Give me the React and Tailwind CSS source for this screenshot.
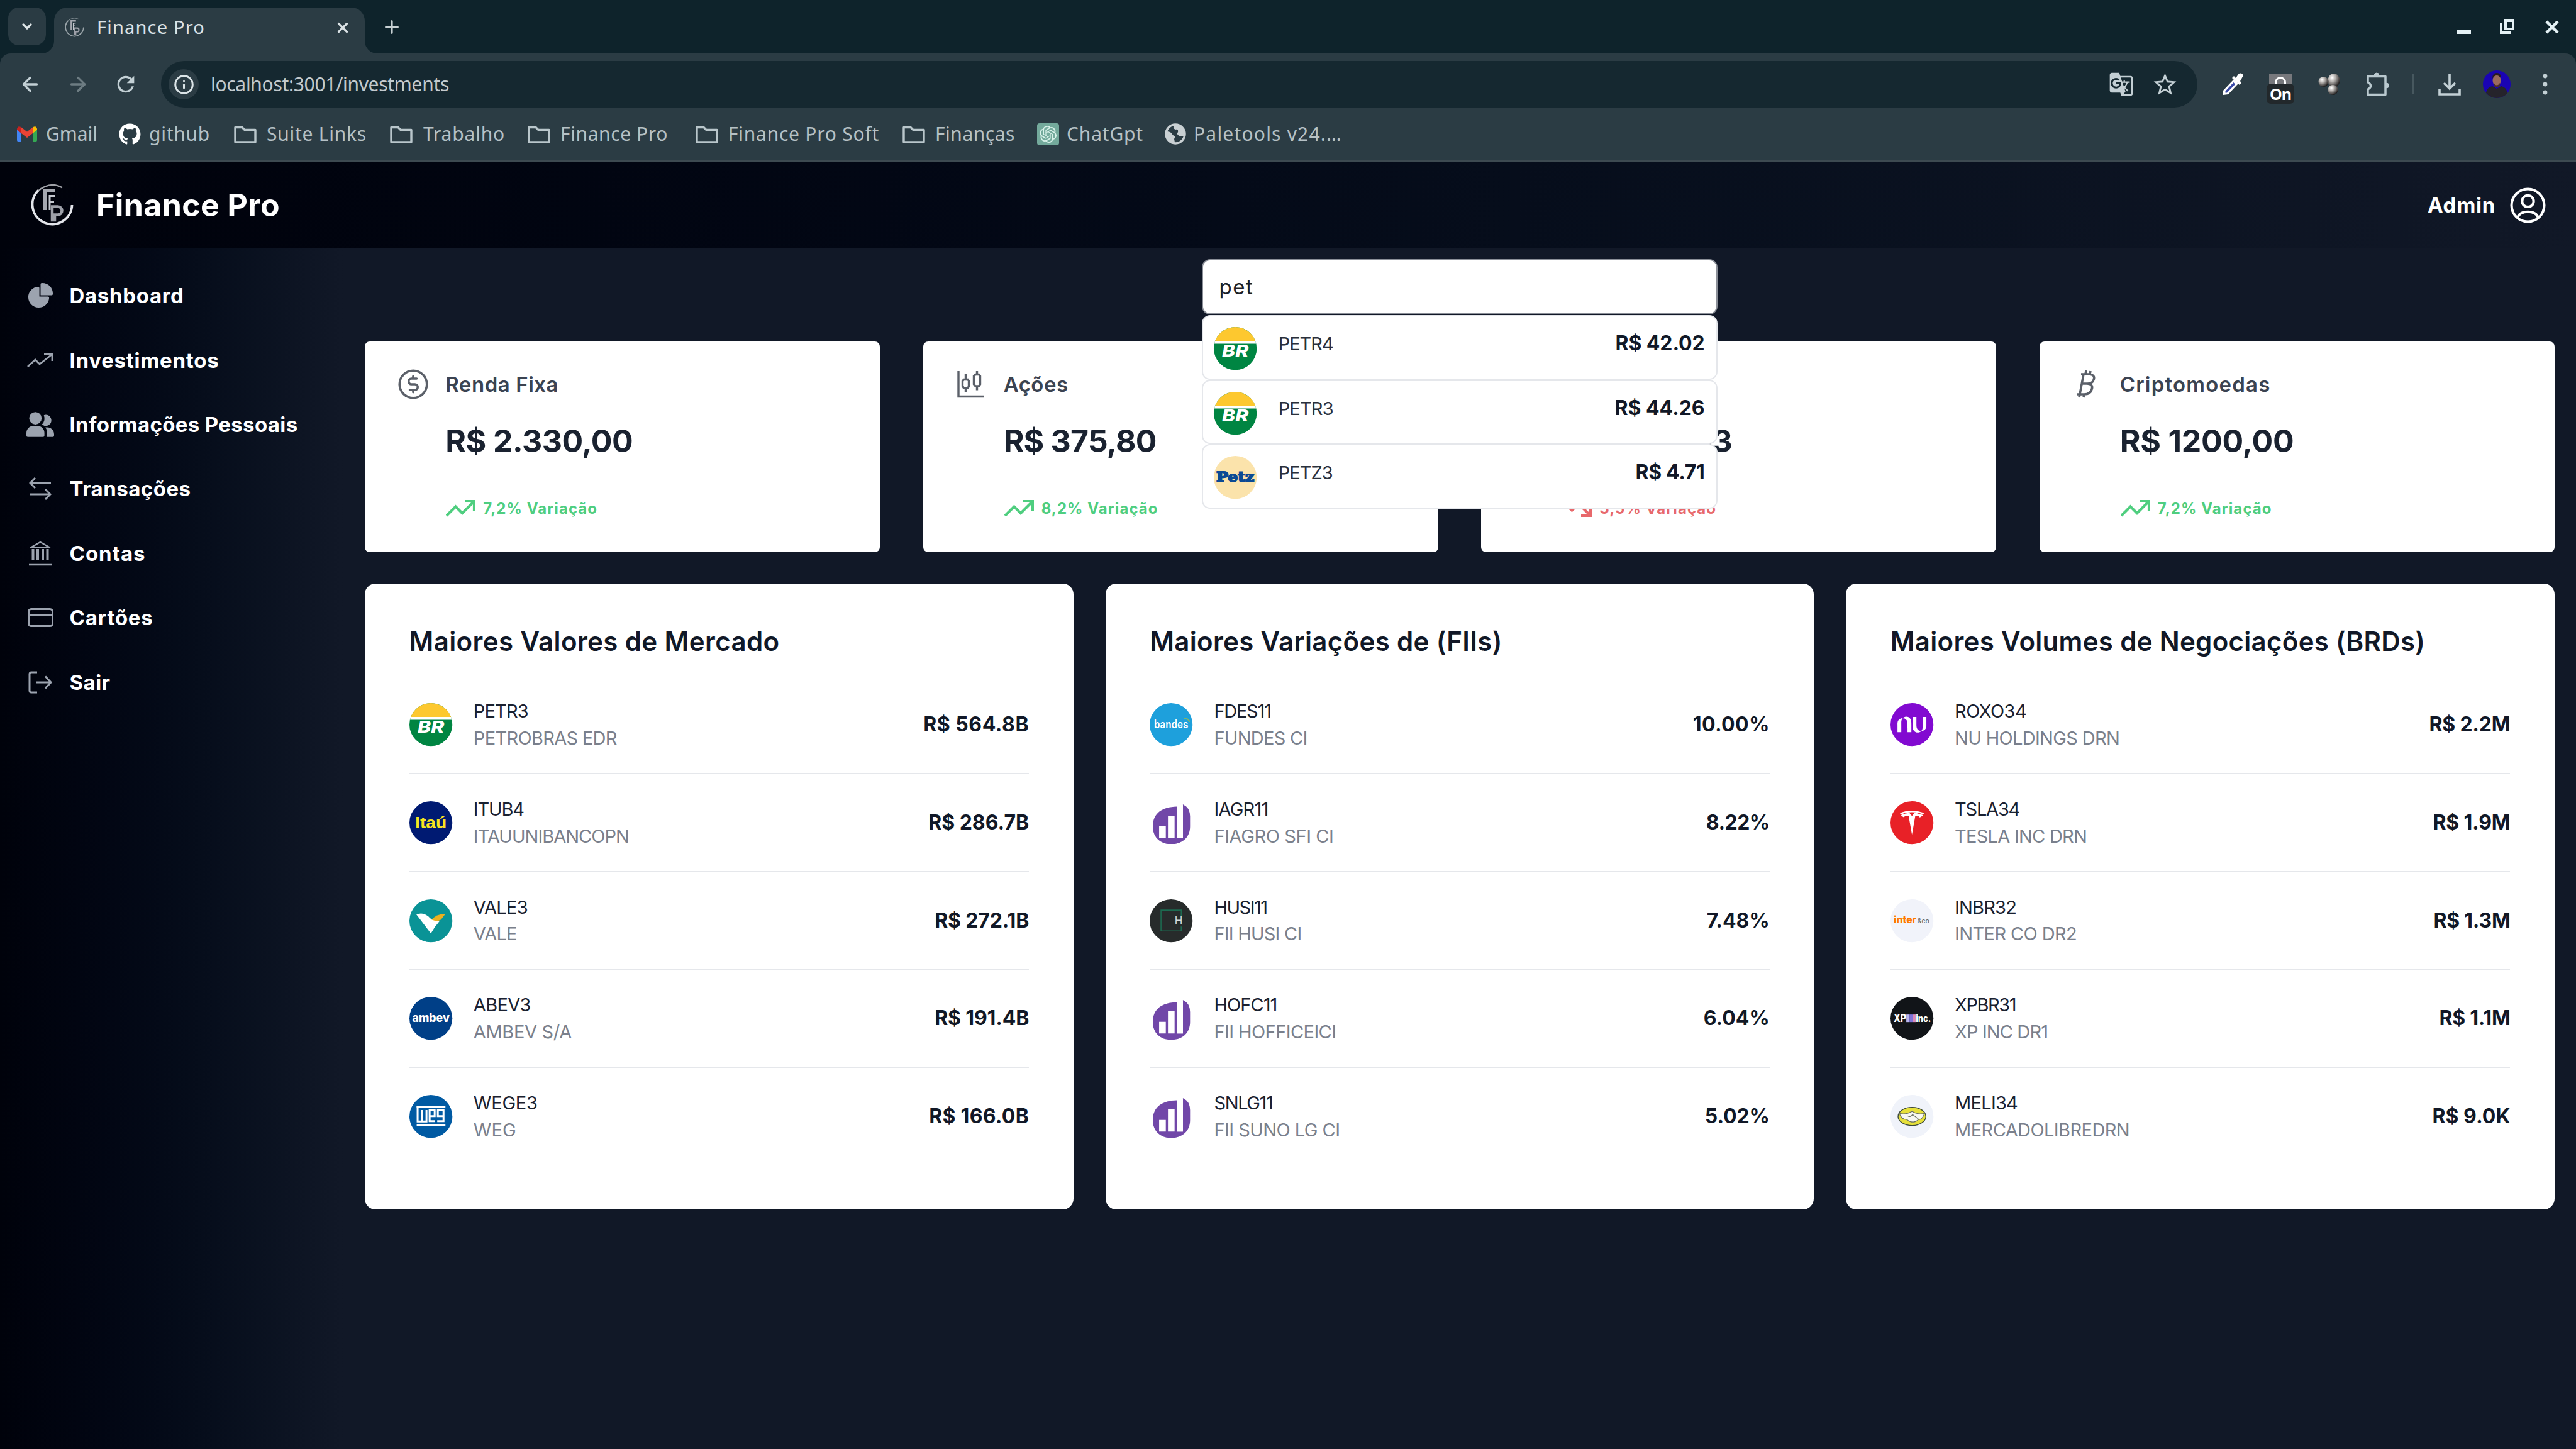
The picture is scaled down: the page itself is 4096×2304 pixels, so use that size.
import { useLayoutEffect, useRef } from 'react';
import { ChevronDown, X, Plus, ArrowLeft, ArrowRight, Info } from 'lucide-react';
import { FaGithub } from 'react-icons/fa';
import { MdGTranslate, MdRefresh, MdStarBorder } from 'react-icons/md';
import { SiOpenai, SiTesla, SiNubank } from 'react-icons/si';
import { PiCurrencyCircleDollar } from 'react-icons/pi';

/* Single-line label whose tracking is adjusted so that it spans `w` pixels. */
function T({ w, className = '', children }) {
  const ref = useRef(null);
  useLayoutEffect(() => {
    const el = ref.current;
    el.style.letterSpacing = '0px';
    const natural = el.getBoundingClientRect().width;
    el.style.letterSpacing = `${(w - natural) / el.textContent.length}px`;
  }, [w, children]);
  return (
    <span ref={ref} className={`inline-block whitespace-pre ${className}`}>
      {children}
    </span>
  );
}

/* ---------- browser chrome ---------- */

function BrandMark({ className }) {
  return (
    <svg viewBox="0 0 68 68" className={className} fill="none">
      <path d="M50 6.500A31.500 31.500 0 0 0 4 25" stroke="currentColor" strokeWidth="2.500" opacity="0.700" />
      <path d="M12 10.500A31.500 31.500 0 1 0 65.500 34" stroke="currentColor" strokeWidth="3.800" />
      <path d="M22.500 42V11.500H39" stroke="#a5a8b0" strokeWidth="5" />
      <path d="M30 42V19.500H38M30 29H37" stroke="#c4c7ce" strokeWidth="3" />
      <path d="M34 58V36.500H43a6.500 6.500 0 0 1 0 13H38V58Z" stroke="#9da0a8" strokeWidth="4.500" />
    </svg>
  );
}

function TabStrip() {
  return (
    <div className="flex h-[85px] items-end bg-[#0e232b] pl-[13px]">
      <div className="mb-[13px] flex size-[60px] items-center justify-center rounded-[17px] bg-[#2a3b43]">
        <ChevronDown className="size-[24px] text-[#dfe6e8]" strokeWidth={3.400} />
      </div>
      <div className="relative ml-[13px] flex h-[73px] w-[494px] items-center rounded-t-[21px] bg-[#2b3c44] pb-[10px] pl-[17px] pr-[22px]">
        <svg viewBox="0 0 20 20" className="absolute bottom-0 -left-[20px] size-[20px]"><path d="M20 0V20H0A20 20 0 0 0 20 0Z" fill="#2b3c44" /></svg>
        <svg viewBox="0 0 20 20" className="absolute bottom-0 -right-[20px] size-[20px]"><path d="M0 0V20H20A20 20 0 0 1 0 0Z" fill="#2b3c44" /></svg>
        <BrandMark className="size-[31px] text-[#9aa4a9]" />
        <T w={172} className="-mt-[2px] ml-[20px] text-[29px] leading-[40px] text-[#dbe2e5]">Finance Pro</T>
        <X className="ml-auto size-[26px] text-[#dbe2e5]" strokeWidth={3} />
      </div>
      <Plus className="mb-[26px] ml-[27px] size-[32px] text-[#c7d0d3]" strokeWidth={2.400} />
      <div className="mb-[31px] ml-auto mr-[27px] flex h-[23px] items-end">
        <div className="h-[6px] w-[22px] bg-[#e4f1f5]" />
        <svg viewBox="0 0 23 23" className="ml-[46px] size-[23px]" fill="none" stroke="#e4f1f5">
          <path d="M9 2H21V15H9Z" strokeWidth="4" />
          <path d="M2 6V21H17" strokeWidth="4" />
        </svg>
        <svg viewBox="0 0 22 22" className="ml-[49px] size-[22px]" stroke="#e4f1f5" strokeWidth="4.500">
          <path d="M2 2L20 20M20 2L2 20" />
        </svg>
      </div>
    </div>
  );
}

function AddressRow() {
  return (
    <div className="flex h-[74px] items-center pl-[30px]">
      <ArrowLeft className="size-[36px] text-[#c3d0d5]" strokeWidth={2.200} />
      <ArrowRight className="ml-[40px] size-[36px] text-[#6d7c82]" strokeWidth={2.200} />
      <MdRefresh className="ml-[38px] size-[40px] text-[#c3d0d5]" />
      <div className="ml-[36px] flex h-[74px] w-[3238px] shrink-0 items-center rounded-full bg-[#152830] pl-[12px] pr-[30px]">
        <div className="flex size-[48px] items-center justify-center rounded-full bg-[#2b3c44]">
          <Info className="size-[33px] text-[#dbe4e7]" strokeWidth={2.200} />
        </div>
        <T w={379} className="ml-[19px] text-[30px] leading-[44px] text-[#c3cacd]">localhost:3001/investments</T>
        <MdGTranslate className="ml-auto size-[40px] text-[#c3cfd4]" />
        <MdStarBorder className="ml-[28px] size-[43px] text-[#c3cfd4]" />
      </div>
      <svg viewBox="0 0 36 38" className="ml-[38px] h-[38px] w-[36px]">
        <path d="M3 36V29L20 11L27 18L11 35Z" fill="#fff" />
        <path d="M6.500 32.500V30L19.500 16L22 19L9 32.500Z" fill="#3a4aa8" />
        <path d="M17 9L20 6L23 9L28 2Q33 0 35 5L30 14L32 17L29 20Z" fill="#fff" />
      </svg>
      <div className="ml-[36px] flex w-[44px] flex-col items-center pt-[14px]">
        <div className="h-[15px] w-[36px] overflow-hidden bg-[#77787c]">
          <div className="mx-auto mt-[4px] h-[24px] w-[18px] rounded-t-full border-[3px] border-white" />
        </div>
        <div className="flex h-[32px] w-[44px] items-center justify-center rounded-[7px] bg-[#22282b]">
          <T w={34} className="text-[25px] font-bold leading-[30px] text-white">On</T>
        </div>
      </div>
      <svg viewBox="0 0 38 38" className="ml-[37px] size-[38px]">
        <defs>
          <radialGradient id="ball" cx="0.350" cy="0.300" r="0.800">
            <stop offset="0" stopColor="#ffffff" />
            <stop offset="0.350" stopColor="#b9b5b2" />
            <stop offset="0.900" stopColor="#1d1a1a" />
          </radialGradient>
        </defs>
        <ellipse cx="26" cy="13" rx="9.500" ry="11" fill="url(#ball)" />
        <circle cx="9.500" cy="15" r="8" fill="url(#ball)" />
        <circle cx="24.500" cy="28" r="8" fill="url(#ball)" />
      </svg>
      <svg viewBox="0 0 38 38" className="ml-[39px] size-[38px]" fill="none" stroke="#b9c8ce" strokeWidth="3.500" strokeLinejoin="round">
        <path d="M3 6.500H31V35.500H3V27Q7.500 25 7.500 21.500Q7.500 18 3 16Z" />
        <path d="M13 5a4 4 0 0 1 8 0ZM32.500 17a4 4 0 0 1 0 8Z" fill="#b9c8ce" strokeWidth="1" />
      </svg>
      <div className="ml-[36px] h-[32px] w-[3px] bg-[#47585f]" />
      <svg viewBox="0 0 36 36" className="ml-[38px] size-[36px]" fill="none" stroke="#c3d0d5" strokeWidth="3.600">
        <path d="M18 1V24M9 16L18 25L27 16M2 26V34H34V26" />
      </svg>
      <svg viewBox="0 0 44 44" className="ml-[35px] size-[44px]">
        <defs><clipPath id="avatar"><circle cx="22" cy="22" r="22" /></clipPath></defs>
        <g clipPath="url(#avatar)">
          <rect width="44" height="44" fill="#1a04b4" />
          <path d="M4 44Q4 27 15 25L22 29L29 25Q40 27 40 44Z" fill="#25232b" />
          <ellipse cx="22" cy="16" rx="6.500" ry="9" fill="#9a6a5c" />
          <path d="M15 13Q15 4 22 4Q29 4 29 13Q26 8 22 8Q18 8 15 13Z" fill="#2a1c20" />
          <path d="M17 20Q22 27 27 20V24Q22 30 17 24Z" fill="#4b2e2c" />
        </g>
      </svg>
      <svg viewBox="0 0 8 34" className="ml-[51px] h-[34px] w-[8px] shrink-0" fill="#c3d0d5">
        <circle cx="4" cy="4" r="3.400" /><circle cx="4" cy="17" r="3.400" /><circle cx="4" cy="30" r="3.400" />
      </svg>
    </div>
  );
}

function Folder() {
  return (
    <svg viewBox="0 0 36 29" className="h-[29px] w-[36px]" fill="none" stroke="#b9c6cb" strokeWidth="3.400" strokeLinejoin="round">
      <path d="M2 3.500H13L17 7.500H34V27H2Z" />
    </svg>
  );
}

function GmailIcon() {
  return (
    <svg viewBox="0 0 32 24" className="h-[24px] w-[32px]">
      <path d="M0 4V22Q0 24 2 24H7V9Z" fill="#4285f4" />
      <path d="M32 4V22Q32 24 30 24H25V9Z" fill="#34a853" />
      <path d="M25 1.500V11L32 5.500V4Q31 -1 27 0.500Z" fill="#fbbc04" />
      <path d="M7 1.500V11L0 5.500V4Q1 -1 5 0.500Z" fill="#c5221f" />
      <path d="M7 1.500L16 8.500L25 1.500V11L16 18L7 11Z" fill="#ea4335" />
    </svg>
  );
}

function GlobeIcon() {
  return (
    <svg viewBox="0 0 34 34" className="size-[34px]">
      <circle cx="17" cy="17" r="15" fill="none" stroke="#c9d0d3" strokeWidth="3.500" />
      <path d="M4 13Q10 13 13 19Q18 20 15 25Q15 29 18 32Q4 32 2 18Z" fill="#c9d0d3" />
      <path d="M15 2Q12 8 17 10Q22 9 21 14Q18 18 23 20Q29 20 31 22Q35 8 24 3Z" fill="#c9d0d3" />
    </svg>
  );
}

const bookmarks = [
  { icon: <GmailIcon />, label: 'Gmail', w: 82, ml: 'ml-[27px]', gap: 'gap-[14px]' },
  { icon: <FaGithub className="size-[35px] text-white" />, label: 'github', w: 97, ml: 'ml-[34px]', gap: 'gap-[13px]' },
  { icon: <Folder />, label: 'Suite Links', w: 159, ml: 'ml-[38px]', gap: 'gap-[16px]' },
  { icon: <Folder />, label: 'Trabalho', w: 130, ml: 'ml-[37px]', gap: 'gap-[17px]' },
  { icon: <Folder />, label: 'Finance Pro', w: 171, ml: 'ml-[36px]', gap: 'gap-[16px]' },
  { icon: <Folder />, label: 'Finance Pro Soft', w: 240, ml: 'ml-[44px]', gap: 'gap-[16px]' },
  { icon: <Folder />, label: 'Finanças', w: 127, ml: 'ml-[37px]', gap: 'gap-[16px]' },
  {
    icon: (
      <div className="flex size-[35px] items-center justify-center rounded-[4px] bg-[#74aa9c]">
        <SiOpenai className="size-[27px] text-[#d9f2ea]" />
      </div>
    ),
    label: 'ChatGpt', w: 122, ml: 'ml-[35px]', gap: 'gap-[12px]',
  },
  { icon: <GlobeIcon />, label: 'Paletools v24.…', w: 236, ml: 'ml-[34px]', gap: 'gap-[12px]' },
];

function Browser() {
  return (
    <div className="h-[258px] bg-[#0e232b] font-['Noto_Sans',sans-serif]">
      <TabStrip />
      <div className="h-[173px] rounded-t-[17px] border-b-[3px] border-[#3d4a51] bg-[#2b3c44] pt-[12px]">
        <AddressRow />
        <div className="flex h-[84px] items-center">
          {bookmarks.map((b) => (
            <div key={b.label} className={`flex items-center ${b.ml} ${b.gap}`}>
              {b.icon}
              <T w={b.w} className="text-[30px] leading-[44px] text-[#b6c1c5]">{b.label}</T>
            </div>
          ))}
        </div>
      </div>
    </div>
  );
}

/* ---------- application header and sidebar ---------- */

function Header() {
  return (
    <header className="flex h-[136px] items-center bg-linear-to-r from-[#00020b] to-[#111827] pl-[49px] pr-[48px] font-bold text-white">
      <BrandMark className="size-[68px] text-[#e3e5ea]" />
      <T w={292} className="ml-[36px] text-[50px] leading-[68px]">Finance Pro</T>
      <T w={108} className="ml-auto text-[33px] leading-[48px]">Admin</T>
      <svg viewBox="0 0 56 56" className="ml-[23px] size-[57px]" fill="none" stroke="#fff" strokeWidth="4">
        <circle cx="28" cy="28" r="25.500" />
        <circle cx="28" cy="21.500" r="9" />
        <path d="M12 47Q15 38 28 38Q41 38 44 47" />
      </svg>
    </header>
  );
}

const navItems = [
  {
    label: 'Dashboard', w: 182,
    icon: (
      <svg viewBox="0 0 22 21" className="h-[41px] w-[43px]" fill="currentColor">
        <path d="M16.975 11H10V4.025a1 1 0 0 0-1.066-.998 8.500 8.500 0 1 0 9.039 9.039.999.999 0 0 0-1-1.066h.002Z" />
        <path d="M12.500 0c-.157 0-.311.010-.565.027A1 1 0 0 0 11 1.020V10h8.975a1 1 0 0 0 1-.935c.013-.188.028-.374.028-.565A8.510 8.510 0 0 0 12.500 0Z" />
      </svg>
    ),
  },
  {
    label: 'Investimentos', w: 238,
    icon: (
      <svg viewBox="0 0 42 24" className="h-[24px] w-[42px]" fill="none" stroke="currentColor" strokeWidth="2.800">
        <path d="M1 22L13 11L20 18L39 3M27 2H40V13" />
      </svg>
    ),
  },
  {
    label: 'Informações Pessoais', w: 363,
    icon: (
      <svg viewBox="0 0 20 18" className="h-[40px] w-[44px]" fill="currentColor">
        <path d="M14 2a3.963 3.963 0 0 0-1.400.267 6.439 6.439 0 0 1-1.331 6.638A4 4 0 1 0 14 2Zm1 9h-1.264A6.957 6.957 0 0 1 15 15v2a2.970 2.970 0 0 1-.184 1H19a1 1 0 0 0 1-1v-1a5.006 5.006 0 0 0-5-5ZM6.500 9a4.500 4.500 0 1 0 0-9 4.500 4.500 0 0 0 0 9ZM8 10H5a5.006 5.006 0 0 0-5 5v2a1 1 0 0 0 1 1h11a1 1 0 0 0 1-1v-2a5.006 5.006 0 0 0-5-5Z" />
      </svg>
    ),
  },
  {
    label: 'Transações', w: 193,
    icon: (
      <svg viewBox="0 0 36 36" className="size-[36px]" fill="none" stroke="currentColor" strokeWidth="3">
        <path d="M35 9H2M10 1L2 9L10 17M1 27H34M26 19L34 27L26 35" />
      </svg>
    ),
  },
  {
    label: 'Contas', w: 121,
    icon: (
      <svg viewBox="0 0 38 40" className="h-[40px] w-[38px]" fill="none" stroke="currentColor">
        <path d="M4 10.500L19 2L34 10.500Z" strokeWidth="2.400" strokeLinejoin="round" />
        <path d="M7.500 13V31M15 13V31M23 13V31M30.500 13V31" strokeWidth="4" />
        <path d="M1 37.500H37" strokeWidth="3.400" />
      </svg>
    ),
  },
  {
    label: 'Cartões', w: 133,
    icon: (
      <svg viewBox="0 0 41 30" className="h-[30px] w-[41px]" fill="none" stroke="currentColor" strokeWidth="3">
        <rect x="1.500" y="1.500" width="38" height="27" rx="4" />
        <path d="M2 10.500H39" />
      </svg>
    ),
  },
  {
    label: 'Sair', w: 65,
    icon: (
      <svg viewBox="0 0 38 36" className="h-[36px] w-[38px]" fill="none" stroke="currentColor" strokeWidth="3">
        <path d="M14 2H5Q2 2 2 5V31Q2 34 5 34H14M12 18H36M27 8.500L36 18L27 27.500" />
      </svg>
    ),
  },
];

function Sidebar() {
  return (
    <aside className="w-[546px] shrink-0 bg-linear-to-r from-[#00020b] to-[#111827] pt-[25px]">
      {navItems.map((n) => (
        <div key={n.label} className="flex h-[102.400px] items-center pl-[36px]">
          <div className="flex w-[56px] justify-center text-[#9ca3af]">{n.icon}</div>
          <T w={n.w} className="ml-[18.500px] text-[33px] font-bold leading-[48px] text-white">{n.label}</T>
        </div>
      ))}
    </aside>
  );
}

/* ---------- company logos (68 x 68 grid) ---------- */

function Disc({ fill, children }) {
  return (
    <svg viewBox="0 0 68 68" className="size-[68.300px] shrink-0 overflow-visible">
      <circle cx="34" cy="34" r="34" fill={fill} />
      {children}
    </svg>
  );
}

function Word({ x = 34, y = 41, size = 22, fill = '#fff', len, family = 'Inter', weight = 800, italic, children }) {
  return (
    <text x={x} y={y} fontSize={size} fill={fill} textAnchor="middle" textLength={len} lengthAdjust="spacingAndGlyphs" fontFamily={family} fontWeight={weight} fontStyle={italic ? 'italic' : 'normal'}>
      {children}
    </text>
  );
}

const Petrobras = () => (
  <Disc fill="#008542">
    <path d="M2.200 22A34 34 0 0 1 65.800 22Z" fill="#fdc82f" />
    <path d="M2.200 22H65.800L67 26.500H1Z" fill="#fff" />
    <Word y={47} size={25} len={42} weight={800} italic>BR</Word>
  </Disc>
);

const Itau = () => (
  <Disc fill="#001a72"><Word y={43} size={26} len={50} fill="#f7e51e" weight={700} family="Liberation Sans">Itaú</Word></Disc>
);

const Vale = () => (
  <Disc fill="#0a9396">
    <path d="M11 24Q23 19 33 30L45 36L34 54Z" fill="#fff" />
    <path d="M36 32L48 34L41 43Z" fill="#fff" />
    <path d="M35 32Q44 23 57 23L50 32Q44 36 35 32Z" fill="#ecb11f" />
  </Disc>
);

const Ambev = () => (
  <Disc fill="#003f87"><Word y={40} size={19} len={59} weight={800}>ambev</Word></Disc>
);

const Weg = () => (
  <Disc fill="#005aa3">
    <g fill="none" stroke="#fff" strokeWidth="3">
      <path d="M11.500 19H57M11.500 48H57" />
      <path d="M13 18V42H27V24M20 24V42M40 41.500H32V24.500H40V33.500H32" />
      <path d="M54 33.500H45V24.500H54V41.500H44" />
    </g>
  </Disc>
);

const Bandes = () => (
  <Disc fill="#1ea0dc">
    <Word y={40} size={18} len={54} weight={600}>bandes</Word>
    <path d="M54 25Q61 23 63 30" stroke="#7fb56a" strokeWidth="2" fill="none" />
  </Disc>
);

const PurpleBars = () => (
  <svg viewBox="0 0 68 68" className="size-[68.300px] shrink-0">
    <path d="M5 40C5 19 20 9 43 8.500V58H52.700V5L58 8.500Q64 14 64 24V40C64 57 52 68 34 68C17 68 5 57 5 40Z" fill="#7147a8" />
    <path d="M15 39.500H25.600V58H15ZM29 23H39.500V58H29ZM43 6H52.700V58H43Z" fill="#fff" />
  </svg>
);

const Husi = () => (
  <Disc fill="#272b2b">
    <path d="M50 26V17H18V50H50V43" stroke="#1d6a50" strokeWidth="1.600" fill="none" />
    <Word x={46} y={40} size={17} weight={400} fill="#d5dada">H</Word>
  </Disc>
);

const Nu = () => (
  <Disc fill="#820ad1"><g transform="translate(11 11)"><SiNubank size={46} color="#fff" /></g></Disc>
);

const Tesla = () => (
  <Disc fill="#e82127"><g transform="translate(15 15)"><SiTesla size={38} color="#fff" /></g></Disc>
);

const Inter = () => (
  <Disc fill="#f1f3fa">
    <Word x={23} y={38} size={15} len={36} fill="#ff7a00">inter</Word>
    <Word x={52} y={38} size={10} len={19} weight={500} fill="#6b6b6b">&amp;co</Word>
  </Disc>
);

const Xp = () => (
  <Disc fill="#111418">
    <Word x={15} y={40} size={17} len={20}>XP</Word>
    <path d="M25 28H30V40H25Z" fill="#b9b4ee" /><path d="M30 28H35V40H30Z" fill="#7f74d8" /><path d="M35 28H40V40H35Z" fill="#d98ab8" />
    <Word x={52} y={40} size={15} len={24}>inc.</Word>
  </Disc>
);

const Meli = () => (
  <Disc fill="#f0f3fa">
    <ellipse cx="34" cy="34" rx="22" ry="14.500" fill="#e6e03a" stroke="#3d4a3a" strokeWidth="1.400" />
    <path d="M14 29Q24 32 34 26Q44 32 54 29Q50 40 44 39Q36 47 26 39Q17 39 14 29Z" fill="#f7f8f2" stroke="#6d7266" strokeWidth="1.200" />
    <path d="M27 33Q32 36 35 31L44 38" stroke="#6d7266" strokeWidth="1.200" fill="none" />
  </Disc>
);

const Petz = () => (
  <Disc fill="#fbe3ab">
    <text x="34" y="41" fontSize="23" fill="#0b4a94" stroke="#0b4a94" strokeWidth="1.800" textAnchor="middle" textLength="60" lengthAdjust="spacingAndGlyphs" fontFamily="DejaVu Serif" fontWeight="700">Petz</text>
  </Disc>
);

/* ---------- content ---------- */

const suggestions = [
  { Logo: Petrobras, code: 'PETR4', cw: 87, price: 'R$ 42.02', pw: 142 },
  { Logo: Petrobras, code: 'PETR3', cw: 87, price: 'R$ 44.26', pw: 143 },
  { Logo: Petz, code: 'PETZ3', cw: 86, price: 'R$ 4.71', pw: 110 },
];

function Search() {
  return (
    <div className="relative mx-auto w-[819.200px]">
      <div className="flex h-[88px] items-center rounded-[13px] border-2 border-[#8b8f98] bg-white pl-[25px]">
        <T w={55} className="text-[33px] leading-[48px] text-[#1c1f26]">pet</T>
      </div>
      <div className="absolute top-[89.400px] left-0 z-10 w-full">
        {suggestions.map(({ Logo, code, cw, price, pw }) => (
          <div key={code} className="flex h-[102.400px] justify-between rounded-[13px] border-2 border-[#e5e7eb] bg-white pt-[17px] pr-[18px] pl-[17px]">
            <div className="flex gap-[34px]">
              <Logo />
              <T w={cw} className="mt-[5px] text-[29px] leading-[43px] text-[#2a303c]">{code}</T>
            </div>
            <T w={pw} className="mt-[2px] text-[32px] font-bold leading-[48px] text-[#111827]">{price}</T>
          </div>
        ))}
      </div>
    </div>
  );
}

const CandleIcon = () => (
  <svg viewBox="0 0 44 44" className="size-[44px]" fill="none" stroke="currentColor" strokeWidth="3.400">
    <path d="M3 1V41.500H43" />
    <path d="M14.500 5V14M14.500 28V34M18 14.500L19.500 17V25L18 28H11.500L9.500 25V17L11.500 14.500ZM32.500 1V7M32.500 25V31.500M35.500 6.500L37.500 9V22L35.500 25H30L27.500 22V9L30 6.500Z" />
  </svg>
);

const BitcoinIcon = () => (
  <svg viewBox="0 0 34 44" className="ml-[4px] h-[44px] w-[34px]" fill="none" stroke="currentColor" strokeWidth="3.600" strokeLinejoin="round">
    <path d="M9 6H22Q32 7 29 15Q27 21 19 21H11M19 21Q29 22 26 30Q24 38 14 38H2M13 6L7 38M16 6L17 0M23 6L24 1M7 38L6 43M14 38L13 43" />
  </svg>
);

const TrendIcon = ({ down }) => (
  <svg viewBox="0 0 47 27" className={down ? 'h-[27px] w-[47px] -scale-y-100' : 'h-[27px] w-[47px]'} fill="none" stroke="currentColor" strokeWidth="4.200">
    <path d="M1 25L15.500 10.500L26 21L44 3M30 2H45V17" />
  </svg>
);

const summary = [
  { icon: <PiCurrencyCircleDollar className="-ml-[5px] size-[58px]" />, name: 'Renda Fixa', nw: 180, amount: 'R$ 2.330,00', aw: 298, change: '7,2% Variação', vw: 182 },
  { icon: <CandleIcon />, name: 'Ações', nw: 103, amount: 'R$ 375,80', aw: 243, change: '8,2% Variação', vw: 186 },
  { icon: <PiCurrencyCircleDollar className="-ml-[5px] size-[58px]" />, name: 'FIIs', nw: 62, amount: 'R$ 1200,33', aw: 271, change: '3,5% Variação', vw: 186, down: true },
  { icon: <BitcoinIcon />, name: 'Criptomoedas', nw: 240, amount: 'R$ 1200,00', aw: 277, change: '7,2% Variação', vw: 182 },
];

function SummaryCard({ icon, name, nw, amount, aw, change, vw, down }) {
  return (
    <div className="h-[335px] rounded-[8px] bg-white pt-[38px] pl-[53px]">
      <div className="flex h-[60px] items-center">
        <div className="flex w-[75px] items-center text-[#5b6069]">{icon}</div>
        <T w={nw} className="text-[33px] font-semibold leading-[48px] text-[#3b4351]">{name}</T>
      </div>
      <T w={aw} className="mt-[28px] ml-[75px] block w-fit text-[50px] font-bold leading-[64px] text-[#1a2230]">{amount}</T>
      <div className={`mt-[56px] ml-[76px] flex h-[40px] items-center gap-[12px] font-bold ${down ? 'text-[#e8686b]' : 'text-[#4fce7f]'}`}>
        <TrendIcon down={down} />
        <T w={vw} className="text-[24px] leading-[36px]">{change}</T>
      </div>
    </div>
  );
}

const rankings = [
  {
    title: 'Maiores Valores de Mercado', tw: 589,
    rows: [
      { Logo: Petrobras, code: 'PETR3', cw: 87, name: 'PETROBRAS EDR', nw: 228, value: 'R$ 564.8B', vw: 168 },
      { Logo: Itau, code: 'ITUB4', cw: 80, name: 'ITAUUNIBANCOPN', nw: 247, value: 'R$ 286.7B', vw: 160 },
      { Logo: Vale, code: 'VALE3', cw: 86, name: 'VALE', nw: 69, value: 'R$ 272.1B', vw: 150 },
      { Logo: Ambev, code: 'ABEV3', cw: 91, name: 'AMBEV S/A', nw: 156, value: 'R$ 191.4B', vw: 150 },
      { Logo: Weg, code: 'WEGE3', cw: 102, name: 'WEG', nw: 68, value: 'R$ 166.0B', vw: 159 },
    ],
  },
  {
    title: 'Maiores Variações de (FIIs)', tw: 560,
    rows: [
      { Logo: Bandes, code: 'FDES11', cw: 90, name: 'FUNDES CI', nw: 148, value: '10.00%', vw: 122 },
      { Logo: PurpleBars, code: 'IAGR11', cw: 86, name: 'FIAGRO SFI CI', nw: 190, value: '8.22%', vw: 101 },
      { Logo: Husi, code: 'HUSI11', cw: 84, name: 'FII HUSI CI', nw: 139, value: '7.48%', vw: 100 },
      { Logo: PurpleBars, code: 'HOFC11', cw: 100, name: 'FII HOFFICEICI', nw: 194, value: '6.04%', vw: 105 },
      { Logo: PurpleBars, code: 'SNLG11', cw: 93, name: 'FII SUNO LG CI', nw: 200, value: '5.02%', vw: 103 },
    ],
  },
  {
    title: 'Maiores Volumes de Negociações (BRDs)', tw: 850,
    rows: [
      { Logo: Nu, code: 'ROXO34', cw: 114, name: 'NU HOLDINGS DRN', nw: 262, value: 'R$ 2.2M', vw: 129 },
      { Logo: Tesla, code: 'TSLA34', cw: 103, name: 'TESLA INC DRN', nw: 210, value: 'R$ 1.9M', vw: 123 },
      { Logo: Inter, code: 'INBR32', cw: 98, name: 'INTER CO DR2', nw: 194, value: 'R$ 1.3M', vw: 122 },
      { Logo: Xp, code: 'XPBR31', cw: 97, name: 'XP INC DR1', nw: 148, value: 'R$ 1.1M', vw: 113 },
      { Logo: Meli, code: 'MELI34', cw: 100, name: 'MERCADOLIBREDRN', nw: 278, value: 'R$ 9.0K', vw: 124 },
    ],
  },
];

function RankingCard({ title, tw, rows }) {
  return (
    <div className="h-[995px] rounded-[17px] bg-white px-[70.400px] pt-[62px]">
      <T w={tw} className="block w-fit text-[42px] font-semibold leading-[60px] text-[#111827]">{title}</T>
      <div className="mt-[26px]">
        {rows.map(({ Logo, code, cw, name, nw, value, vw }) => (
          <div key={code} className="flex h-[155.700px] items-center border-b-2 border-[#e5e7eb] last:border-transparent">
            <Logo />
            <div className="ml-[34px] flex flex-col items-start pt-[1px] text-[29px] leading-[42.700px]">
              <T w={cw} className="text-[#1a2130]">{code}</T>
              <T w={nw} className="text-[#7a808c]">{name}</T>
            </div>
            <T w={vw} className="ml-auto text-[32px] font-bold leading-[48px] text-[#111827]">{value}</T>
          </div>
        ))}
      </div>
    </div>
  );
}

export default function App() {
  return (
    <div className="flex h-[2304px] w-[4096px] flex-col overflow-hidden bg-[#111827] font-['Inter',sans-serif]">
      <Browser />
      <Header />
      <div className="flex grow">
        <Sidebar />
        <main className="grow px-[34.150px] pt-[18px]">
          <Search />
          <section className="mt-[36.500px] grid grid-cols-4 gap-[68.270px] pt-[6px]">
            {summary.map((s) => <SummaryCard key={s.name} {...s} />)}
          </section>
          <section className="mt-[50px] grid grid-cols-3 gap-[51.200px]">
            {rankings.map((r) => <RankingCard key={r.title} {...r} />)}
          </section>
        </main>
      </div>
    </div>
  );
}
